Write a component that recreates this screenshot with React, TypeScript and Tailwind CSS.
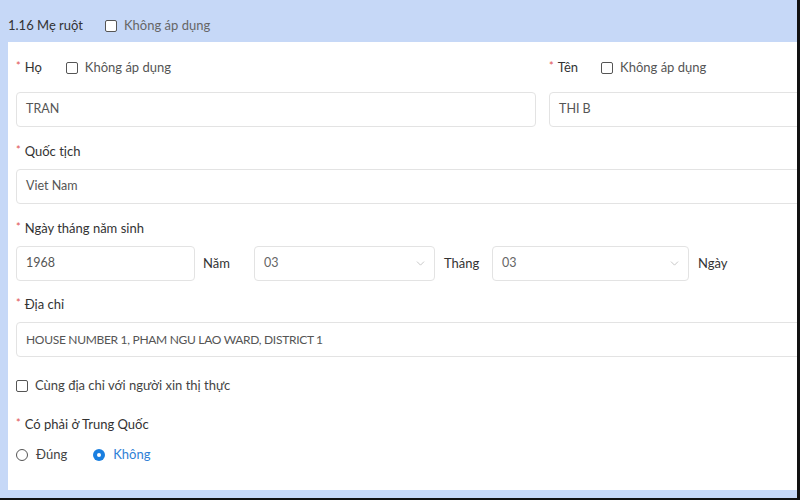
import { ChevronDown } from 'lucide-react';

function Box() {
  return <span className="inline-block w-[12px] h-[12px] border border-[#555] rounded-[2px] bg-white shrink-0" />;
}

function Label({ text, children }: { text: string; children?: React.ReactNode }) {
  return (
    <div className="flex items-center h-[24px] text-[13px] text-[#333]">
      <span className="text-[#e05050] text-[11px] mr-[4px] -mt-[3px]">*</span>
      <span>{text}</span>
      {children}
    </div>
  );
}

function NotApply({ ml }: { ml: string }) {
  return (
    <span className={`flex items-center gap-[7px] text-[#555] ${ml}`}>
      <Box />
      <span>Không áp dụng</span>
    </span>
  );
}

function Input({ value, className }: { value: string; className: string }) {
  return (
    <div className={`h-[35px] border border-[#e3e3e3] rounded-[4px] bg-white flex items-center pl-[9px] text-[12.5px] text-[#555] ${className}`}>
      {value}
    </div>
  );
}

function Select({ value, className }: { value: string; className: string }) {
  return (
    <div className={`h-[35px] border border-[#e3e3e3] rounded-[4px] bg-white flex items-center justify-between pl-[9px] pr-[7px] text-[12.5px] text-[#666] ${className}`}>
      <span>{value}</span>
      <ChevronDown className="w-[13px] h-[13px] text-[#bbb]" strokeWidth={1.5} />
    </div>
  );
}

export default function App() {
  return (
    <div
      className="w-[800px] h-[500px] bg-[#c6d8f7] overflow-hidden flex flex-col border-r-[3px] border-b-[2px] border-r-[#111] border-b-[#111]"
      style={{ fontFamily: 'Lato, "Noto Sans", sans-serif' }}
    >
      {/* header */}
      <div className="h-[42px] shrink-0 flex items-center pl-[8px] pt-[10px] text-[13px]">
        <span className="text-[#333]">1.16 Mẹ ruột</span>
        <span className="flex items-center gap-[7px] ml-[22px] text-[#666]">
          <Box />
          <span>Không áp dụng</span>
        </span>
      </div>

      {/* body */}
      <div className="ml-[8px] h-[448px] bg-white overflow-hidden pl-[8px] pt-[14px]">
        <div className="w-[1060px] flex flex-col">
          <div className="grid grid-cols-[520px_1fr] gap-x-[13px]">
            <div>
              <Label text="Họ">
                <NotApply ml="ml-[24px]" />
              </Label>
              <Input value="TRAN" className="mt-[12px]" />
            </div>
            <div>
              <Label text="Tên">
                <NotApply ml="ml-[23px]" />
              </Label>
              <Input value="THI B" className="mt-[12px]" />
            </div>
          </div>

          <div className="mt-[13px]">
            <Label text="Quốc tịch" />
            <Input value="Viet Nam" className="mt-[5px] h-[34px]" />
          </div>

          <div className="mt-[13px]">
            <Label text="Ngày tháng năm sinh" />
            <div className="mt-[5px] flex items-center text-[13px] text-[#333]">
              <Input value="1968" className="w-[179px]" />
              <span className="ml-[8px] w-[51px]">Năm</span>
              <Select value="03" className="w-[181px]" />
              <span className="ml-[9px] w-[48px]">Tháng</span>
              <Select value="03" className="w-[197px]" />
              <span className="ml-[9px]">Ngày</span>
            </div>
          </div>

          <div className="mt-[12px]">
            <Label text="Địa chỉ" />
            <Input value="HOUSE NUMBER 1, PHAM NGU LAO WARD, DISTRICT 1" className="mt-[5px] h-[34px] !text-[12px] tracking-[-0.3px]" />
          </div>

          <div className="mt-[17px] flex items-center h-[24px] gap-[7px] text-[13px] text-[#444]">
            <Box />
            <span>Cùng địa chỉ với người xin thị thực</span>
          </div>

          <div className="mt-[15px]">
            <Label text="Có phải ở Trung Quốc" />
          </div>

          <div className="mt-[6px] h-[24px] flex items-center text-[13px]">
            <span className="w-[12px] h-[12px] rounded-full border border-[#555] bg-white" />
            <span className="ml-[8px] text-[#444]">Đúng</span>
            <span className="ml-[26px] w-[12px] h-[12px] rounded-full bg-[#1a7fe0] flex items-center justify-center">
              <span className="w-[4px] h-[4px] rounded-full bg-white" />
            </span>
            <span className="ml-[8px] text-[#2f7fd6]">Không</span>
          </div>
        </div>
      </div>
    </div>
  );
}
